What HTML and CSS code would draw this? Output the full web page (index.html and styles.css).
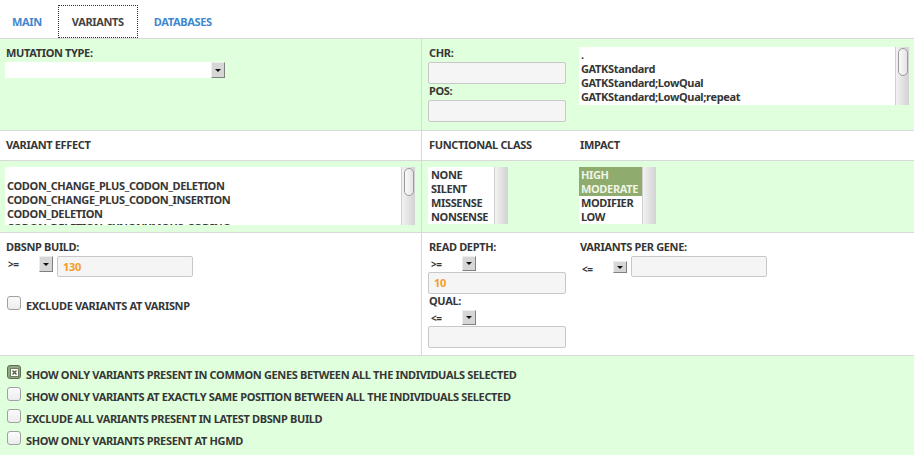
FILE: index.html
```html
<!DOCTYPE html>
<html>
<head>
<meta charset="utf-8">
<link rel="stylesheet" href="styles.css">
</head>
<body>
<div class="tabs">
  <div class="tab">MAIN</div>
  <div class="tab active">VARIANTS</div>
  <div class="tab">DATABASES</div>
</div>
<div class="filters">
  <div class="row r1 green">
    <div class="cell c1">
      <div class="label">MUTATION TYPE:</div>
      <div class="select wide"><span class="sel-text"></span><span class="sel-btn"><span class="tri"></span></span></div>
    </div>
    <div class="cell c2">
      <div class="label">CHR:</div>
      <div class="input"></div>
      <div class="label">POS:</div>
      <div class="input"></div>
    </div>
    <div class="cell c3">
      <div class="listbox filter-list">
        <div class="items">
          <div class="opt">.</div>
          <div class="opt">GATKStandard</div>
          <div class="opt">GATKStandard;LowQual</div>
          <div class="opt">GATKStandard;LowQual;repeat</div>
        </div>
        <div class="sb"><div class="thumb"></div></div>
      </div>
    </div>
  </div>
  <div class="row r2">
    <div class="cell c1"><div class="label">VARIANT EFFECT</div></div>
    <div class="cell c2"><div class="label">FUNCTIONAL CLASS</div></div>
    <div class="cell c3"><div class="label">IMPACT</div></div>
  </div>
  <div class="row r3 green">
    <div class="cell c1">
      <div class="listbox effect-list">
        <div class="items">
          <div class="opt blank"></div>
          <div class="opt">CODON_CHANGE_PLUS_CODON_DELETION</div>
          <div class="opt">CODON_CHANGE_PLUS_CODON_INSERTION</div>
          <div class="opt">CODON_DELETION</div>
          <div class="opt partial">CODON_DELETION_SYNONYMOUS_CODING</div>
        </div>
        <div class="sb"><div class="thumb"></div></div>
      </div>
    </div>
    <div class="cell c2">
      <div class="listbox class-list">
        <div class="items">
          <div class="opt">NONE</div>
          <div class="opt">SILENT</div>
          <div class="opt">MISSENSE</div>
          <div class="opt">NONSENSE</div>
        </div>
        <div class="sb"></div>
      </div>
    </div>
    <div class="cell c3">
      <div class="listbox impact-list">
        <div class="items">
          <div class="opt sel">HIGH</div>
          <div class="opt sel">MODERATE</div>
          <div class="opt">MODIFIER</div>
          <div class="opt">LOW</div>
        </div>
        <div class="sb"></div>
      </div>
    </div>
  </div>
  <div class="row r4">
    <div class="cell c1">
      <div class="label">DBSNP BUILD:</div>
      <div class="line">
        <div class="select small"><span class="sel-text">&gt;=</span><span class="sel-btn"><span class="tri"></span></span></div>
        <div class="input mid value">130</div>
      </div>
      <label class="check varisnp"><span class="box"></span><span class="check-text">EXCLUDE VARIANTS AT VARISNP</span></label>
    </div>
    <div class="cell c2">
      <div class="label">READ DEPTH:</div>
      <div class="select small compact"><span class="sel-text">&gt;=</span><span class="sel-btn"><span class="tri"></span></span></div>
      <div class="input value tight">10</div>
      <div class="label">QUAL:</div>
      <div class="select small compact"><span class="sel-text">&lt;=</span><span class="sel-btn"><span class="tri"></span></span></div>
      <div class="input tight"></div>
    </div>
    <div class="cell c3">
      <div class="label">VARIANTS PER GENE:</div>
      <div class="line">
        <div class="select small low"><span class="sel-text">&lt;=</span><span class="sel-btn"><span class="tri"></span></span></div>
        <div class="input mid"></div>
      </div>
    </div>
  </div>
  <div class="row r5 green">
    <label class="check"><span class="box checked"><svg width="9" height="9" viewBox="0 0 9 9"><rect x="0.5" y="0.5" width="8" height="8" fill="#fff" stroke="#6d7f5d"/><path d="M2.5 2.5 L6.5 6.5 M6.5 2.5 L2.5 6.5" stroke="#4a5a3e" stroke-width="1.3"/></svg></span><span class="check-text">SHOW ONLY VARIANTS PRESENT IN COMMON GENES BETWEEN ALL THE INDIVIDUALS SELECTED</span></label>
    <label class="check"><span class="box"></span><span class="check-text">SHOW ONLY VARIANTS AT EXACTLY SAME POSITION BETWEEN ALL THE INDIVIDUALS SELECTED</span></label>
    <label class="check"><span class="box"></span><span class="check-text">EXCLUDE ALL VARIANTS PRESENT IN LATEST DBSNP BUILD</span></label>
    <label class="check"><span class="box"></span><span class="check-text">SHOW ONLY VARIANTS PRESENT AT HGMD</span></label>
  </div>
</div>
</body>
</html>
```
FILE: styles.css
```css
* { box-sizing: border-box; }
html, body { margin: 0; padding: 0; background: #fff; }
body {
  font-family: "Noto Sans", "Open Sans", "DejaVu Sans", sans-serif;
  font-size: 11px;
  font-weight: bold;
  letter-spacing: -0.35px;
  color: #363636;
  width: 914px;
  height: 455px;
  overflow: hidden;
}
.tabs {
  display: flex;
  gap: 2px;
  height: 38px;
  padding-top: 5px;
}
.tab {
  height: 33px;
  line-height: 32px;
  padding: 0 13px;
  color: #3f87cf;
  border: 1px solid transparent;
}
.tab:first-child { padding-left: 11px; }
.tab.active {
  color: #444;
  border: 1px dotted #333;
}
.filters { border-top: 1px solid #d9d9d9; }
.row {
  display: grid;
  grid-template-columns: 421px 152px 1fr;
  border-bottom: 1px solid #d9d9d9;
}
.green { background: #e0ffdc; }
.c2 { border-left: 1px solid #d9d9d9; }
.r1 { height: 92px; }
.r2 { height: 30px; }
.r3 { height: 72px; }
.r4 { height: 123px; }
.r5 { display: block; height: 100px; border-bottom: none; padding-top: 9px; }
.cell { padding: 7px 5px 0 5px; }
.c2, .c3 { padding-left: 6px; padding-right: 6px; }
.label { line-height: 14px; padding-left: 1px; }
.r3 .cell { padding-top: 6px; }

.select {
  display: flex;
  align-items: stretch;
  height: 16px;
  margin-top: 2px;
}
.select.wide { width: 220px; }
.select.wide .sel-text { flex: 1; background: #fff; }
.select.small { width: 48px; }
.select.small .sel-text {
  flex: 1;
  padding-left: 3px;
  line-height: 17px;
  font-size: 10px;
}
.select.compact { height: 15px; margin-top: 2px; }
.select.low { margin-top: 5px; height: 12px; }
.sel-btn {
  width: 14px;
  background: #d6d6d6;
  border-top: 1px solid #eee;
  border-left: 1px solid #eee;
  border-right: 1px solid #808080;
  border-bottom: 1px solid #808080;
  display: flex;
  align-items: center;
  justify-content: center;
}
.tri {
  width: 0; height: 0;
  border-left: 3px solid transparent;
  border-right: 3px solid transparent;
  border-top: 3px solid #111;
}
.input {
  width: 138px;
  height: 22px;
  margin-top: 2px;
  background: #f5f5f5;
  border: 1px solid #c8c8c8;
  border-radius: 2px;
  line-height: 20px;
  padding-left: 5px;
}
.input.tight { margin-top: 1px; }
.input.value { color: #f39c27; }
.input.mid { width: 136px; height: 21px; margin-top: 0; }
.line { display: flex; gap: 4px; align-items: flex-start; margin-top: 2px; }
.line .select { margin-top: 0; }
.line .select.low { margin-top: 5px; }

.listbox {
  display: flex;
  background: #fff;
  overflow: hidden;
}
.items { flex: 1; overflow: hidden; padding-left: 2px; }
.opt { line-height: 14px; height: 14px; white-space: nowrap; }
.opt.blank { height: 12px; }
.opt.partial { height: 4px; overflow: hidden; }
.sb {
  width: 14px;
  flex: none;
  background: linear-gradient(to right, #f2f2f2, #d2d2d2);
  border-left: 1px solid #d0d0d0;
  padding: 1px 1px 0 2px;
}
.thumb {
  height: 28px;
  border: 1px solid #9a9a9a;
  border-radius: 5px;
  background: linear-gradient(to right, #fafafa, #e4e4e4);
}
.filter-list { width: 330px; height: 58px; margin-top: 1px; padding-top: 1px; }
.filter-list .sb { margin-top: -1px; }
.effect-list { width: 410px; height: 58px; }
.class-list { width: 80px; height: 57px; padding-top: 1px; }
.class-list .sb { margin-top: -1px; }
.class-list .items { padding-left: 3px; }
.impact-list { width: 77px; height: 57px; }
.impact-list .items { padding-left: 0; }
.impact-list .opt { padding-left: 2px; }
.impact-list .opt:first-child { height: 15px; line-height: 16px; }
.opt.sel { background: #90ab6e; color: #eef5e4; }

.check {
  display: flex;
  align-items: flex-start;
  height: 22px;
  padding-left: 7px;
}
.box {
  width: 14px;
  height: 14px;
  border: 1px solid #a0a0a0;
  border-radius: 3px;
  background: linear-gradient(#fbfbfb, #ececec);
  flex: none;
  display: flex;
  align-items: center;
  justify-content: center;
}
.box.checked {
  border-color: #5e6e50;
  background: #93a683;
}
.check-text { padding-left: 5px; padding-top: 3px; line-height: 14px; }
.varisnp { margin-top: 19px; padding-left: 2px; }
```
